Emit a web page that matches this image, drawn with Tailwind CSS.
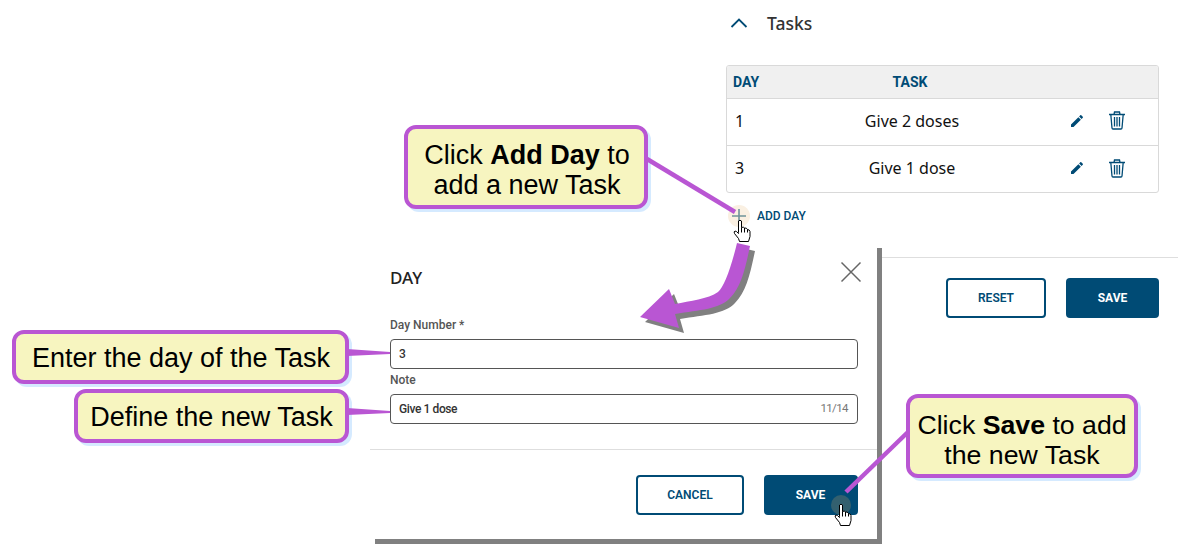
<!DOCTYPE html>
<html lang="en">

<head>
    <meta charset="UTF-8">
    <title>Add Day</title>
    <script src="https://cdn.jsdelivr.net/npm/@tailwindcss/browser@4"></script>
</head>

<body class="bg-white">
    <div class="relative w-[1178px] h-[556px] overflow-hidden bg-white font-['Noto_Sans',sans-serif]">

        <!-- Tasks section -->
        <div class="ml-[726px] w-[452px] pt-[12px]">
            <div class="flex items-center h-[22px]">
                <svg class="ml-[4px] w-[18px] h-[12px]" viewBox="0 0 18 12" fill="none" stroke="#004b75" stroke-width="1.8"><path d="M1.500 10 L9 2.500 L16.500 10" /></svg>
                <span class="ml-[19px] text-[17.500px] font-medium text-[#333]">Tasks</span>
            </div>

            <div class="mt-[31px] w-[433px] h-[128px] border border-[#d9d9d9] rounded-[3px] overflow-hidden">
                <div class="flex items-center h-[33px] bg-[#f0f0f0] border-b border-[#d9d9d9] font-['Roboto',sans-serif] text-[14px] font-bold text-[#004b75]">
                    <div class="w-[64px] pl-[6px]">DAY</div>
                    <div class="w-[238px] text-center">TASK</div>
                </div>
                <div class="flex items-center h-[47px] pb-[3px] border-b border-[#d9d9d9] text-[16px] text-[#111]">
                    <div class="w-[64px] pl-[8px]">1</div>
                    <div class="w-[242px] text-center">Give 2 doses</div>
                    <div class="flex items-center pl-[36px] gap-[23px]">
                        <svg class="w-[16px] h-[16px]" viewBox="0 0 24 24" fill="#004b75"><path d="M3 17.250V21h3.750L17.810 9.940l-3.750-3.750L3 17.250zM20.710 7.040c.39-.39.39-1.020 0-1.410l-2.340-2.340c-.39-.39-1.020-.39-1.410 0l-1.830 1.830 3.750 3.750 1.830-1.830z" /></svg>
                        <svg class="w-[18px] h-[19px]" viewBox="0 0 18 19" fill="none" stroke="#004b75" stroke-width="1.300"><path d="M1 3.500 H17 M6 3.500 L6.500 1 H11.500 L12 3.500 M2.800 3.500 L4 17 Q4.100 18 5 18 H13 Q13.900 18 14 17 L15.200 3.500 M6.500 6 V15.500 M9 6 V15.500 M11.500 6 V15.500" /></svg>
                    </div>
                </div>
                <div class="flex items-center h-[46px] pb-[2px] text-[16px] text-[#111]">
                    <div class="w-[64px] pl-[8px]">3</div>
                    <div class="w-[242px] text-center">Give 1 dose</div>
                    <div class="flex items-center pl-[36px] gap-[23px]">
                        <svg class="w-[16px] h-[16px]" viewBox="0 0 24 24" fill="#004b75"><path d="M3 17.250V21h3.750L17.810 9.940l-3.750-3.750L3 17.250zM20.710 7.040c.39-.39.39-1.020 0-1.410l-2.340-2.340c-.39-.39-1.020-.39-1.410 0l-1.830 1.830 3.750 3.750 1.830-1.830z" /></svg>
                        <svg class="w-[18px] h-[19px]" viewBox="0 0 18 19" fill="none" stroke="#004b75" stroke-width="1.300"><path d="M1 3.500 H17 M6 3.500 L6.500 1 H11.500 L12 3.500 M2.800 3.500 L4 17 Q4.100 18 5 18 H13 Q13.900 18 14 17 L15.200 3.500 M6.500 6 V15.500 M9 6 V15.500 M11.500 6 V15.500" /></svg>
                    </div>
                </div>
            </div>

            <div class="flex items-center mt-[12px] h-[22px]">
                <div class="ml-[2px] w-[22px] h-[22px] rounded-full bg-[#faf0e2] flex items-center justify-center">
                    <svg class="w-[16px] h-[16px]" viewBox="0 0 16 16" stroke="#6f9299" stroke-width="1.600"><path d="M1 8 H15 M8 1 V15" /></svg>
                </div>
                <span class="ml-[7px] font-['Roboto',sans-serif] text-[12px] font-medium text-[#004b75]">ADD DAY</span>
            </div>

            <div class="mt-[30px] h-px bg-[#dedede]"></div>

            <div class="flex mt-[20px] w-[433px] justify-end gap-[20px] font-['Roboto',sans-serif] text-[12px]">
                <div class="w-[100px] h-[40px] flex items-center justify-center border-2 border-[#004b75] rounded-[4px] font-semibold text-[#004b75]">RESET</div>
                <div class="w-[93px] h-[40px] flex items-center justify-center bg-[#004b75] rounded-[4px] font-bold text-white">SAVE</div>
            </div>
        </div>

        <!-- Dialog -->
        <div class="absolute left-[370px] top-[248px] w-[512px] h-[296px]">
            <div class="absolute left-[5px] top-0 w-[507px] h-[296px] bg-[#808080]"></div>
            <div class="relative w-[507px] h-[291px] bg-white">
                <div class="flex justify-between pl-[20px] pr-[15px] h-[44px]">
                    <div class="pt-[19px] text-[17px] leading-[22px] font-medium text-[#222]">DAY</div>
                    <svg class="mt-[13px] w-[22px] h-[22px]" viewBox="0 0 22 22" stroke="#666" stroke-width="1.500"><path d="M1.500 1.500 L20.500 20.500 M20.500 1.500 L1.500 20.500" /></svg>
                </div>
                <div class="px-[20px] pr-[19px] pt-[25px] font-['Roboto',sans-serif] text-[12px] text-[#555]">
                    <div class="h-[22px] leading-[16px] font-medium">Day Number *</div>
                    <div class="flex items-center h-[30px] px-[8px] border border-[#555] rounded-[4px] text-[#333] font-medium">3</div>
                    <div class="mt-[3px] h-[22px] leading-[16px] font-medium">Note</div>
                    <div class="flex items-center justify-between h-[30px] px-[8px] pr-[9px] border border-[#555] rounded-[4px] font-medium">
                        <span class="text-[#333] tracking-[-0.4px]">Give 1 dose</span>
                        <span class="text-[#777] font-normal text-[11.500px] tracking-[-0.6px]">11/14</span>
                    </div>
                </div>
                <div class="mt-[25px] h-px bg-[#dedede]"></div>
                <div class="flex justify-end gap-[20px] pt-[25px] pr-[19px] font-['Roboto',sans-serif] text-[12px]">
                    <div class="w-[108px] h-[40px] flex items-center justify-center border-2 border-[#004b75] rounded-[4px] font-semibold text-[#004b75]">CANCEL</div>
                    <div class="relative w-[94px] h-[40px] pr-[1px] flex items-center justify-center bg-[#004b75] rounded-[4px] font-bold text-white">
                        SAVE
                        <div class="absolute left-[67px] top-[20px] w-[20px] h-[20px] rounded-full bg-[#33606f]"></div>
                    </div>
                </div>
            </div>
        </div>

        <!-- Callouts -->
        <div class="absolute left-[404px] top-[125px] w-[244px] h-[84px] pt-[6px] pl-[2px] flex items-center justify-center border-4 border-[#b956d3] rounded-[12px] bg-[#f7f5c0] shadow-[3px_3px_0_#d5eaff] font-['Liberation_Sans',sans-serif] text-[27px] leading-[30px] text-black text-center">
            <div>Click <b>Add Day</b> to<br>add a new Task</div>
        </div>
        <div class="absolute left-[12px] top-[330px] w-[337px] h-[54px] pt-[2px] pl-[1px] flex items-center justify-center border-4 border-[#b956d3] rounded-[12px] bg-[#f7f5c0] shadow-[3px_3px_0_#d5eaff] font-['Liberation_Sans',sans-serif] text-[27px] text-black">Enter the day of the Task</div>
        <div class="absolute left-[74px] top-[389px] w-[275px] h-[54px] pt-[3px] flex items-center justify-center border-4 border-[#b956d3] rounded-[12px] bg-[#f7f5c0] shadow-[3px_3px_0_#d5eaff] font-['Liberation_Sans',sans-serif] text-[27px] text-black">Define the new Task</div>
        <div class="absolute left-[906px] top-[394px] w-[232px] h-[84px] pt-[7px] flex items-center justify-center border-4 border-[#b956d3] rounded-[12px] bg-[#f7f5c0] shadow-[3px_3px_0_#d5eaff] font-['Liberation_Sans',sans-serif] text-[26.700px] leading-[30px] text-black text-center">
            <div>Click <b>Save</b> to add<br>the new Task</div>
        </div>

        <!-- Connectors, arrow and cursors drawn over the screen -->
        <svg class="absolute left-0 top-0 w-[1178px] h-[556px]" viewBox="0 0 1178 556" fill="none">
            <path d="M647 159 L735 212" stroke="#b956d3" stroke-width="4.500" />
            <path d="M347 349 L390 352 L390 354 L347 356 Z" fill="#b956d3" />
            <path d="M347 408 L390 411 L390 413 L347 415 Z" fill="#b956d3" />
            <path d="M908 432 L846 492" stroke="#b956d3" stroke-width="4.500" />

            <path transform="translate(5 5)" d="M669 289 L675 304 C690 301 708 299 718 292 C724 287 731 268 737 243 L750 246 C745 270 741 287 730 298 C720 309 700 310 675 314 L679 328 L640 317 Z" fill="#808080" />
            <path d="M669 289 L675 304 C690 301 708 299 718 292 C724 287 731 268 737 243 L750 246 C745 270 741 287 730 298 C720 309 700 310 675 314 L679 328 L640 317 Z" fill="#b956d3" />

            <g transform="translate(733.500 219.500)" fill="#fff" stroke="#000" stroke-width="1">
                <path d="M5 13 V1.500 Q6.500 0 8 1.500 V8 Q10 7 11 8.500 Q13 8 14 10 Q16 10 16.500 12 V17 L15 22 H6 L5 19 L1 14 Q0 12 1.500 11.500 Q3 11.500 5 14 Z" />
                <path d="M8 8 V13 M11 8.500 V13 M14 10 V13" />
            </g>
            <g transform="translate(834.500 503.500)" fill="#fff" stroke="#000" stroke-width="1">
                <path d="M5 13 V1.500 Q6.500 0 8 1.500 V8 Q10 7 11 8.500 Q13 8 14 10 Q16 10 16.500 12 V17 L15 22 H6 L5 19 L1 14 Q0 12 1.500 11.500 Q3 11.500 5 14 Z" />
                <path d="M8 8 V13 M11 8.500 V13 M14 10 V13" />
            </g>
        </svg>
    </div>
</body>

</html>
